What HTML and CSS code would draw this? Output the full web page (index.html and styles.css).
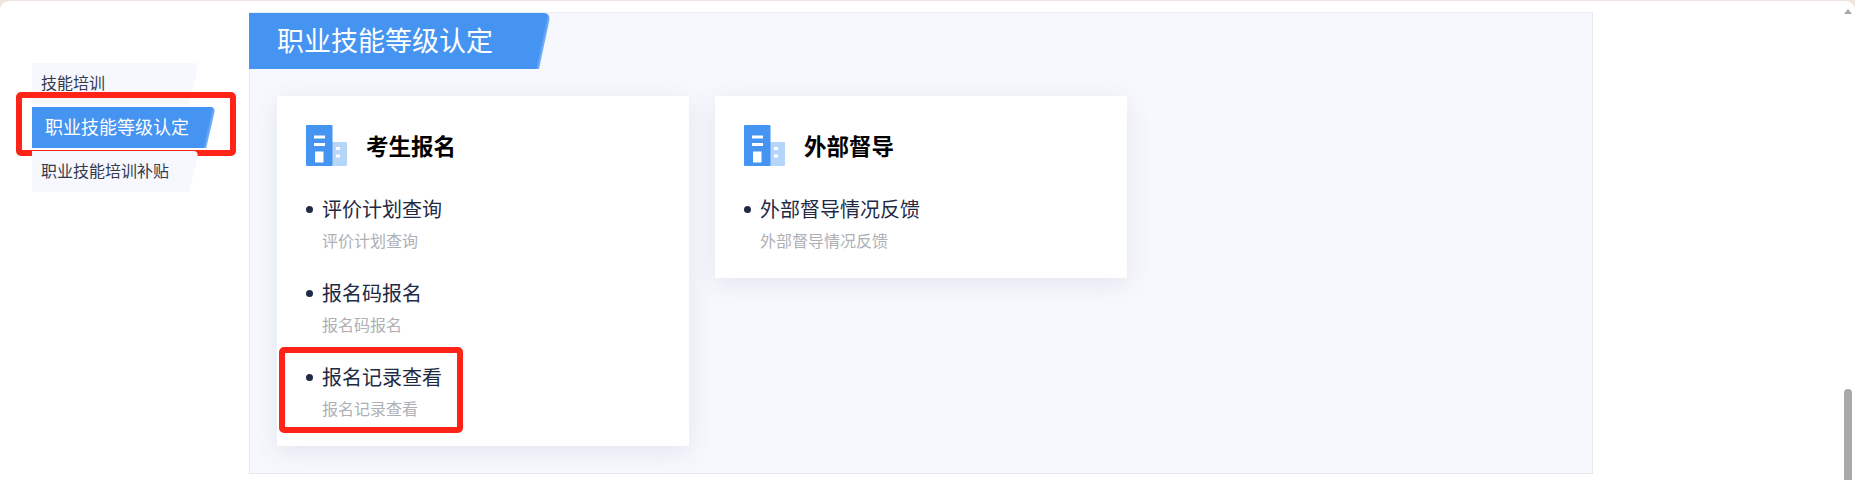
FILE: index.html
```html
<!DOCTYPE html>
<html lang="zh-CN">
<head>
    <meta charset="UTF-8">
    <meta name="viewport" content="width=device-width, initial-scale=1.0">
    <title>职业技能等级认定</title>
    <link rel="stylesheet" href="styles.css">
</head>
<body>
    <div class="page">
        <!-- 左侧菜单 -->
        <ul class="side-menu">
            <li class="side-item">技能培训</li>
            <li class="side-item side-item-active">职业技能等级认定</li>
            <li class="side-item">职业技能培训补贴</li>
        </ul>

        <div class="panel">
            <h2 class="panel-title">职业技能等级认定</h2>
            <div class="card-row">
                <div class="card">
                    <div class="card-head">
                        <svg class="card-icon" viewBox="0 0 41 41">
                            <rect x="26" y="17" width="15" height="24" rx="1" fill="#b5d6f8"/>
                            <rect x="30" y="22" width="4" height="3" fill="#fff"/>
                            <rect x="30" y="29.5" width="4" height="3" fill="#fff"/>
                            <rect x="0" y="0" width="26.5" height="41" rx="1" fill="#4594f2"/>
                            <rect x="8" y="10.5" width="11" height="3" fill="#fff"/>
                            <rect x="8" y="18" width="11" height="3" fill="#fff"/>
                            <rect x="9" y="26.5" width="8.5" height="11" fill="#fff"/>
                        </svg>
                        <h3 class="card-name">考生报名</h3>
                    </div>
                    <ul class="card-list">
                        <li class="card-item">
                            <p class="item-name">评价计划查询</p>
                            <p class="item-desc">评价计划查询</p>
                        </li>
                        <li class="card-item">
                            <p class="item-name">报名码报名</p>
                            <p class="item-desc">报名码报名</p>
                        </li>
                        <li class="card-item card-item-marked">
                            <p class="item-name">报名记录查看</p>
                            <p class="item-desc">报名记录查看</p>
                        </li>
                    </ul>
                </div>

                <div class="card">
                    <div class="card-head">
                        <svg class="card-icon" viewBox="0 0 41 41">
                            <rect x="26" y="17" width="15" height="24" rx="1" fill="#b5d6f8"/>
                            <rect x="30" y="22" width="4" height="3" fill="#fff"/>
                            <rect x="30" y="29.5" width="4" height="3" fill="#fff"/>
                            <rect x="0" y="0" width="26.5" height="41" rx="1" fill="#4594f2"/>
                            <rect x="8" y="10.5" width="11" height="3" fill="#fff"/>
                            <rect x="8" y="18" width="11" height="3" fill="#fff"/>
                            <rect x="9" y="26.5" width="8.5" height="11" fill="#fff"/>
                        </svg>
                        <h3 class="card-name">外部督导</h3>
                    </div>
                    <ul class="card-list">
                        <li class="card-item">
                            <p class="item-name">外部督导情况反馈</p>
                            <p class="item-desc">外部督导情况反馈</p>
                        </li>
                    </ul>
                </div>
            </div>
        </div>

        <!-- 滚动条 -->
        <div class="scroll-arrow"></div>
        <div class="scroll-thumb"></div>
    </div>
</body>
</html>
```

FILE: styles.css
```css
*, *::before, *::after {
    box-sizing: border-box;
}

body {
    margin: 0;
    overflow: hidden;
    background-color: #efe4e0;
    font-family: "Noto Sans CJK SC", "Noto Sans", sans-serif;
    color: #1f2a44;
}

ul {
    margin: 0;
    padding: 0;
    list-style: none;
}

p, h2, h3 {
    margin: 0;
    font-weight: normal;
}

.page {
    position: relative;
    display: flex;
    align-items: flex-start;
    height: 479px;
    margin-top: 1px;
    padding: 11px 0 0 32px;
    background-color: #fff;
    border-radius: 9px 9px 0 0;
    overflow: hidden;
}

/* 左侧菜单 */
.side-menu {
    width: 217px;
    flex-shrink: 0;
    margin-top: 51px;
}

.side-item {
    position: relative;
    isolation: isolate;
    width: 152px;
    height: 41px;
    margin-bottom: 3px;
    padding-left: 9px;
    font-size: 16px;
    line-height: 39px;
    white-space: nowrap;
    color: #333a4d;
    background-color: #f6f8fd;
}

.side-item::after {
    content: "";
    position: absolute;
    z-index: -1;
    top: 0;
    bottom: 0;
    right: -10px;
    width: 24px;
    background-color: #f6f8fd;
    border-top-right-radius: 5px;
    transform: skewX(-13deg);
}

.side-item-active {
    width: 169px;
    padding-left: 13px;
    font-size: 18px;
    color: #fff;
    background-color: #4594f2;
}

.side-item-active::after {
    background: linear-gradient(90deg, #4594f2 85%, #7fb5f6 100%);
}

/* 红色标注框 */
.side-item-active::before {
    content: "";
    position: absolute;
    top: -15px;
    left: -16px;
    width: 220px;
    height: 64px;
    border: 6px solid #ff2417;
    border-radius: 5px;
}

.card-item-marked::after {
    content: "";
    position: absolute;
    top: -12px;
    left: -27px;
    width: 184px;
    height: 86px;
    border: 6px solid #ff2417;
    border-radius: 5px;
}

/* 右侧内容 */
.panel {
    width: 1344px;
    height: 462px;
    background-color: #f7f8fd;
    border: 1px solid #e6e8f0;
    border-top-color: #eceef5;
}

.panel-title {
    position: relative;
    isolation: isolate;
    width: 284px;
    height: 56px;
    margin-left: -1px;
    padding-left: 28px;
    font-size: 27px;
    line-height: 54px;
    color: #fff;
    background-color: #4594f2;
}

.panel-title::after {
    content: "";
    position: absolute;
    z-index: -1;
    top: 0;
    bottom: 0;
    right: -12px;
    width: 30px;
    background: linear-gradient(90deg, #4594f2 88%, #7fb5f6 100%);
    border-top-right-radius: 7px;
    transform: skewX(-12deg);
}

.card-row {
    display: flex;
    gap: 26.5px;
    align-items: flex-start;
    padding: 27px 0 0 27px;
}

.card {
    width: 411.5px;
    padding: 29px 29px 3px;
    background-color: #fff;
    box-shadow: 0 6px 24px rgba(60, 80, 130, 0.11);
}

.card-head {
    display: flex;
    align-items: center;
    gap: 19px;
    margin-bottom: 25px;
}

.card-icon {
    width: 41px;
    height: 41px;
    flex-shrink: 0;
}

.card-name {
    padding-bottom: 2px;
    font-size: 22.5px;
    font-weight: 700;
    color: #000;
}

.card-item {
    position: relative;
    height: 84px;
    padding-left: 16px;
}

.card-item::before {
    content: "";
    position: absolute;
    top: 15px;
    left: 0;
    width: 7px;
    height: 7px;
    border-radius: 50%;
    background-color: #1f2a44;
}

.item-name {
    font-size: 20px;
    line-height: 36px;
}

.item-desc {
    margin-top: 1px;
    font-size: 16px;
    line-height: 24px;
    color: #aeb0b6;
}

/* 滚动条 */
.scroll-arrow {
    position: absolute;
    top: 8px;
    right: 3px;
    border-left: 4.5px solid transparent;
    border-right: 4.5px solid transparent;
    border-bottom: 5px solid #a8a8a8;
}

.scroll-thumb {
    position: absolute;
    top: 388px;
    right: 3px;
    width: 8px;
    height: 100px;
    border-radius: 4px;
    background-color: #a8a8a8;
}
```
